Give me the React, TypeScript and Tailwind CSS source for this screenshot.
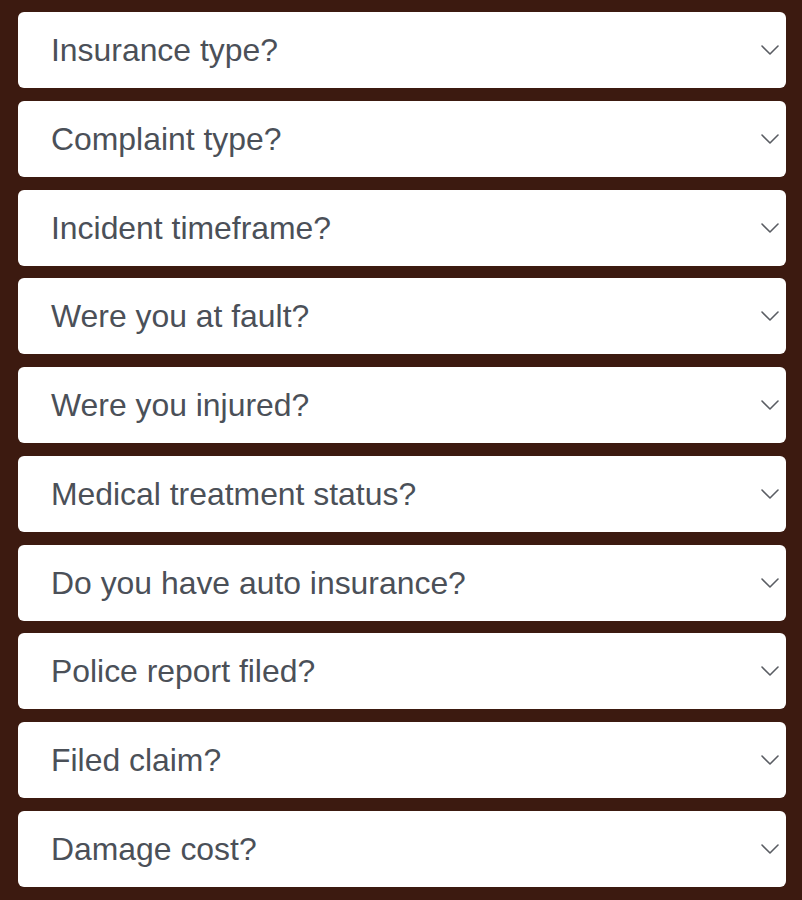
import React from 'react';

const questions = [
  'Insurance type?',
  'Complaint type?',
  'Incident timeframe?',
  'Were you at fault?',
  'Were you injured?',
  'Medical treatment status?',
  'Do you have auto insurance?',
  'Police report filed?',
  'Filed claim?',
  'Damage cost?',
];

function Chevron() {
  return (
    <svg width="18" height="10" viewBox="0 0 18 10" fill="none" className="shrink-0">
      <path d="M1 1l8 8 8-8" stroke="#5a5d63" strokeWidth="1.6" strokeLinecap="round" strokeLinejoin="round" />
    </svg>
  );
}

function Question({ label }: { label: string }) {
  return (
    <button className="flex h-[76px] w-full items-center justify-between rounded-[6px] bg-white pl-[33px] pr-[7px] text-left">
      <span className="pt-[2px] text-[31.9px] leading-none text-[#4b5058]">{label}</span>
      <Chevron />
    </button>
  );
}

export default function App() {
  return (
    <div
      className="flex min-h-[900px] w-full flex-col gap-[12.78px] bg-[#3c1a10] pt-[12px] pr-[16px] pl-[18px] pb-[13px]"
      style={{ fontFamily: '"Liberation Sans", Arial, sans-serif' }}
    >
      {questions.map((q) => (
        <Question key={q} label={q} />
      ))}
    </div>
  );
}
